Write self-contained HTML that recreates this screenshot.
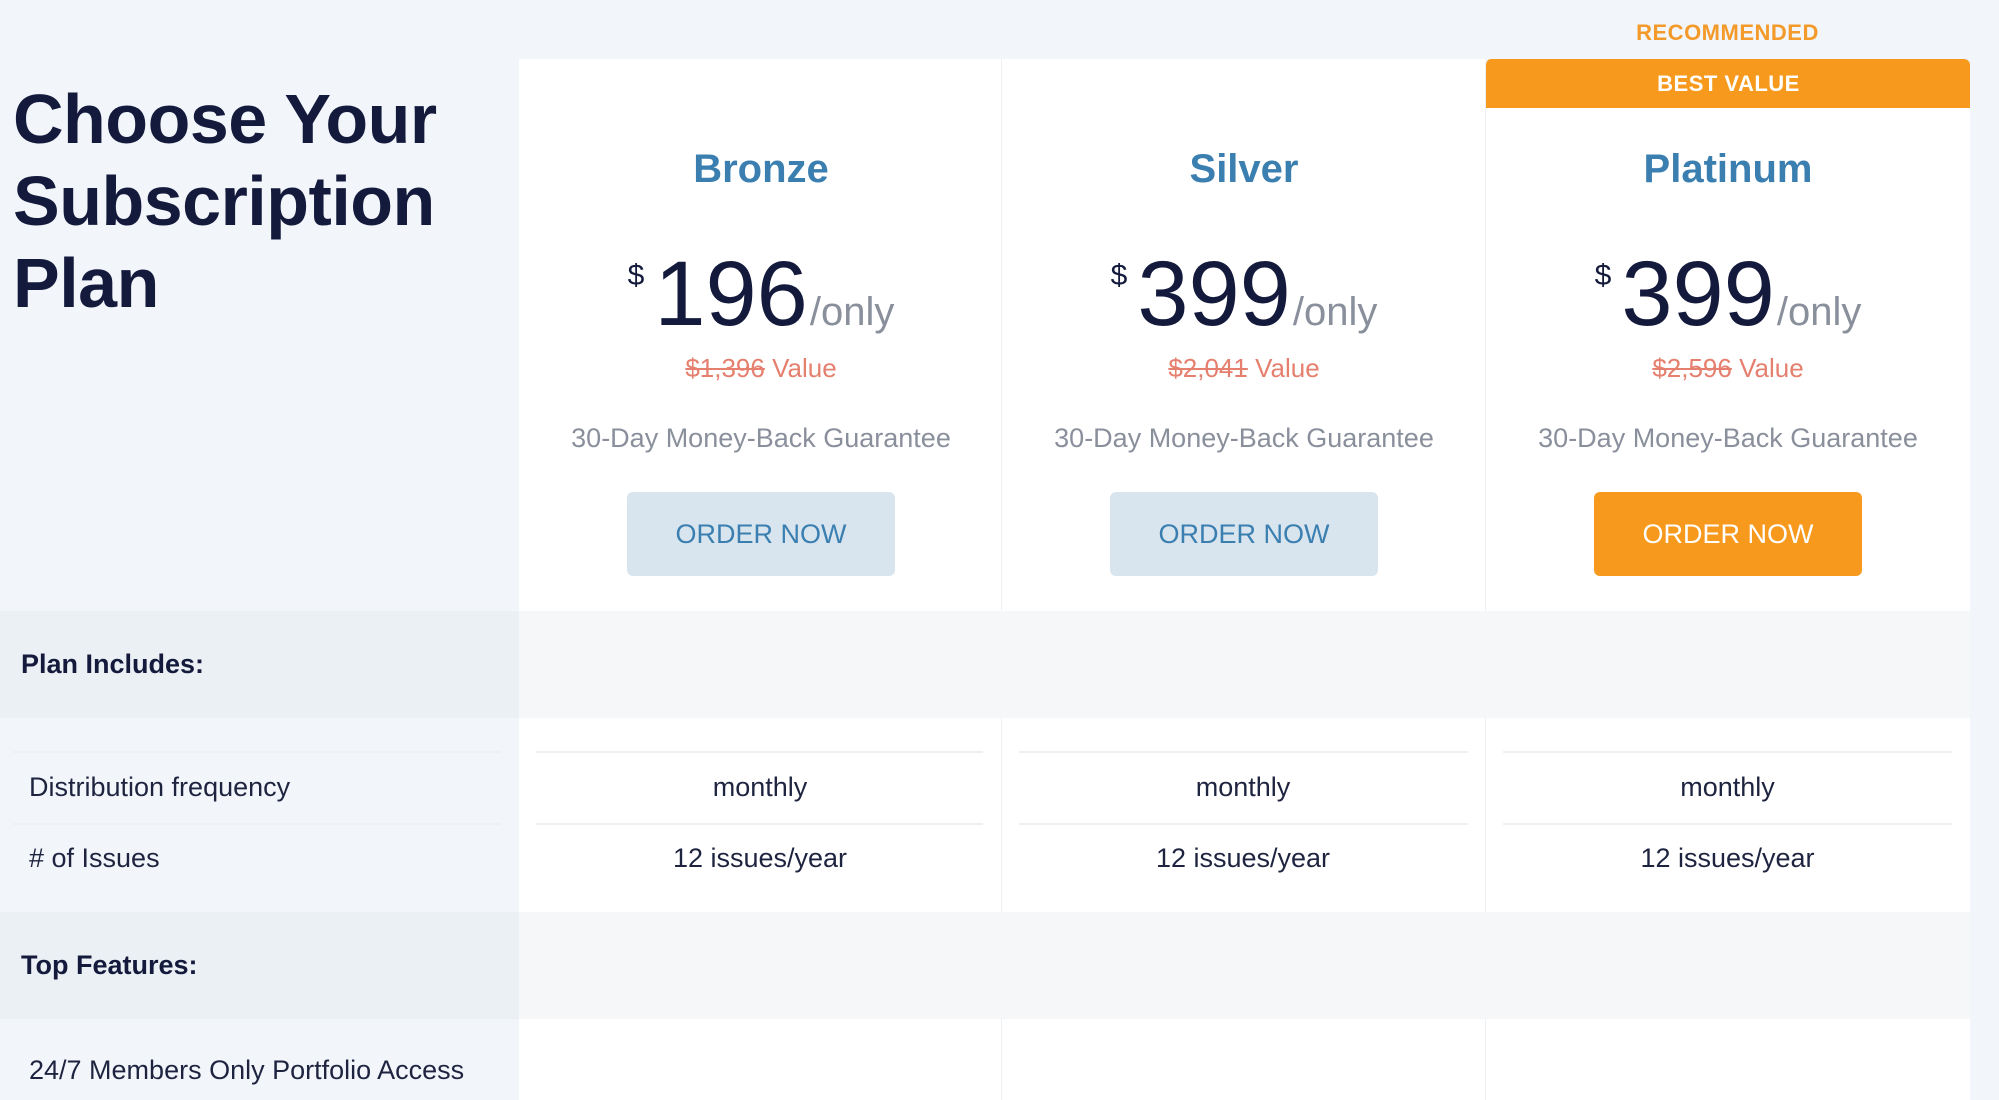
<!DOCTYPE html>
<html><head><meta charset="utf-8"><style>
*{margin:0;padding:0;box-sizing:border-box}
body{width:1999px;height:1100px;overflow:hidden;background:#f2f6fa;font-family:"Liberation Sans","DejaVu Sans",sans-serif;position:relative;color:#141a3c}
.a{position:absolute}
.title{left:13px;top:78px;font-size:70px;font-weight:bold;line-height:82px;color:#141a3c;letter-spacing:-0.5px}
.card{top:59px;height:552px;background:#fff;width:484px}
.c{text-align:center;width:484px;left:0}
.name{top:88px;font-size:40px;font-weight:bold;color:#3b7fb0}
.price{top:180px;height:110px;font-size:92px;color:#141a3c;line-height:110px}
.price .d{font-size:30px;vertical-align:top;position:relative;top:-18px;margin-right:10px}
.price .o{font-size:40px;color:#8a8f9c;margin-left:2px}
.val{top:294px;font-size:26px;color:#e57f6e}
.val s{text-decoration-thickness:2px}
.g{top:364px;font-size:27px;color:#8a8f9c}
.btn{top:433px;left:108px;width:268px;height:84px;border-radius:6px;background:#d8e5ef;color:#3b7fb0;font-size:27px;line-height:84px;text-align:center}
.or{background:#f7991c;color:#fff}
.row{height:107px}
.lab{font-size:27px;font-weight:bold;color:#141a3c}
.t{font-size:27px;color:#1e2440}
.line{height:2px;background:#eef1f4}
</style></head><body>
<div class="a title">Choose Your<br>Subscription<br>Plan</div>

<div class="a" style="left:1485px;top:20px;width:485px;text-align:center;font-size:22px;font-weight:bold;color:#f39a2a;letter-spacing:0.5px">RECOMMENDED</div>

<!-- cards -->
<div class="a card" style="left:519px">
 <div class="a c name">Bronze</div>
 <div class="a c price"><span class="d">$</span>196<span class="o">/only</span></div>
 <div class="a c val"><s>$1,396</s> Value</div>
 <div class="a c g">30-Day Money-Back Guarantee</div>
 <div class="a btn">ORDER NOW</div>
</div>
<div class="a card" style="left:1001px;border-left:1px solid #eef0f2">
 <div class="a c name">Silver</div>
 <div class="a c price"><span class="d">$</span>399<span class="o">/only</span></div>
 <div class="a c val"><s>$2,041</s> Value</div>
 <div class="a c g">30-Day Money-Back Guarantee</div>
 <div class="a btn">ORDER NOW</div>
</div>
<div class="a card" style="left:1485px;width:485px;border-left:1px solid #eef0f2;border-radius:6px 6px 0 0;overflow:hidden">
 <div class="a" style="left:0;top:0;width:485px;height:49px;background:#f7991c;color:#fff;font-weight:bold;font-size:22px;line-height:49px;text-align:center;letter-spacing:0.5px">BEST VALUE</div>
 <div class="a c name">Platinum</div>
 <div class="a c price"><span class="d">$</span>399<span class="o">/only</span></div>
 <div class="a c val"><s>$2,596</s> Value</div>
 <div class="a c g">30-Day Money-Back Guarantee</div>
 <div class="a btn or">ORDER NOW</div>
</div>

<!-- Plan includes row -->
<div class="a row" style="left:0;top:611px;width:519px;background:#ebf0f5"></div>
<div class="a row" style="left:519px;top:611px;width:1451px;background:#f6f7f9"></div>
<div class="a lab" style="left:21px;top:649px">Plan Includes:</div>

<!-- white rows -->
<div class="a" style="left:519px;top:718px;width:1451px;height:194px;background:#fff"></div>
<div class="a" style="left:1001px;top:718px;width:1px;height:382px;background:#eef0f2"></div>
<div class="a" style="left:1485px;top:718px;width:1px;height:382px;background:#eef0f2"></div>
<div class="a line" style="left:13px;top:751px;width:488px"></div>
<div class="a line" style="left:13px;top:823px;width:488px"></div>
<div class="a line" style="left:536px;top:751px;width:447px"></div>
<div class="a line" style="left:536px;top:823px;width:447px"></div>
<div class="a line" style="left:1019px;top:751px;width:449px"></div>
<div class="a line" style="left:1019px;top:823px;width:449px"></div>
<div class="a line" style="left:1503px;top:751px;width:449px"></div>
<div class="a line" style="left:1503px;top:823px;width:449px"></div>

<div class="a t" style="left:29px;top:772px">Distribution frequency</div>
<div class="a t" style="left:29px;top:843px"># of Issues</div>
<div class="a t" style="left:519px;width:482px;text-align:center;top:772px">monthly</div>
<div class="a t" style="left:1001px;width:484px;text-align:center;top:772px">monthly</div>
<div class="a t" style="left:1485px;width:485px;text-align:center;top:772px">monthly</div>
<div class="a t" style="left:519px;width:482px;text-align:center;top:843px">12 issues/year</div>
<div class="a t" style="left:1001px;width:484px;text-align:center;top:843px">12 issues/year</div>
<div class="a t" style="left:1485px;width:485px;text-align:center;top:843px">12 issues/year</div>

<!-- Top features -->
<div class="a row" style="left:0;top:912px;width:519px;background:#ebf0f5"></div>
<div class="a row" style="left:519px;top:912px;width:1451px;background:#f6f7f9"></div>
<div class="a lab" style="left:21px;top:950px">Top Features:</div>

<div class="a" style="left:519px;top:1019px;width:1451px;height:81px;background:#fff"></div>
<div class="a" style="left:1001px;top:1019px;width:1px;height:81px;background:#eef0f2"></div>
<div class="a" style="left:1485px;top:1019px;width:1px;height:81px;background:#eef0f2"></div>
<div class="a t" style="left:29px;top:1055px">24/7 Members Only Portfolio Access</div>
</body></html>
